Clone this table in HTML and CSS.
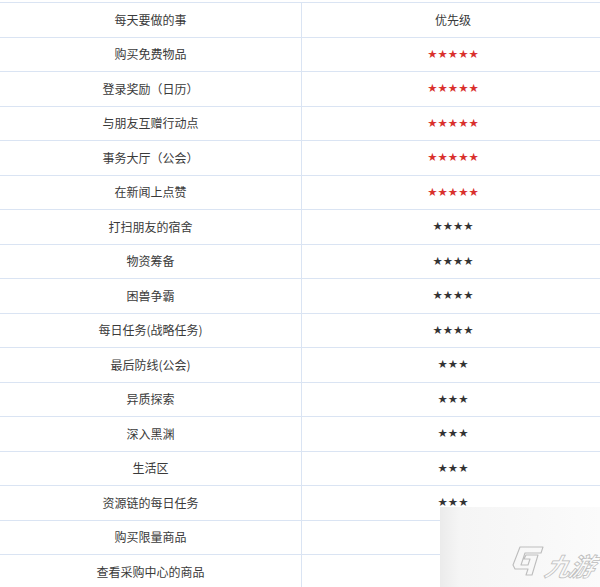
FILE: index.html
```html
<!DOCTYPE html>
<html lang="zh-CN">
<head>
<meta charset="utf-8">
<title>每天要做的事</title>
<link rel="stylesheet" href="styles.css">
</head>
<body>
<div class="table">
  <div class="row"><div class="cell name">每天要做的事</div><div class="cell prio">优先级</div></div>
  <div class="row"><div class="cell name">购买免费物品</div><div class="cell prio stars red">★★★★★</div></div>
  <div class="row"><div class="cell name">登录奖励（日历）</div><div class="cell prio stars red">★★★★★</div></div>
  <div class="row"><div class="cell name">与朋友互赠行动点</div><div class="cell prio stars red">★★★★★</div></div>
  <div class="row"><div class="cell name">事务大厅（公会）</div><div class="cell prio stars red">★★★★★</div></div>
  <div class="row"><div class="cell name">在新闻上点赞</div><div class="cell prio stars red">★★★★★</div></div>
  <div class="row"><div class="cell name">打扫朋友的宿舍</div><div class="cell prio stars">★★★★</div></div>
  <div class="row"><div class="cell name">物资筹备</div><div class="cell prio stars">★★★★</div></div>
  <div class="row"><div class="cell name">困兽争霸</div><div class="cell prio stars">★★★★</div></div>
  <div class="row"><div class="cell name">每日任务(战略任务)</div><div class="cell prio stars">★★★★</div></div>
  <div class="row"><div class="cell name">最后防线(公会)</div><div class="cell prio stars">★★★</div></div>
  <div class="row"><div class="cell name">异质探索</div><div class="cell prio stars">★★★</div></div>
  <div class="row"><div class="cell name">深入黑渊</div><div class="cell prio stars">★★★</div></div>
  <div class="row"><div class="cell name">生活区</div><div class="cell prio stars">★★★</div></div>
  <div class="row"><div class="cell name">资源链的每日任务</div><div class="cell prio stars">★★★</div></div>
  <div class="row"><div class="cell name">购买限量商品</div><div class="cell prio stars"></div></div>
  <div class="row"><div class="cell name">查看采购中心的商品</div><div class="cell prio stars"></div></div>
</div>
<div class="watermark">
  <svg class="wm-icon" width="34" height="32" viewBox="0 0 34 32" fill="none" stroke="#bdbdbd" stroke-width="1.1" stroke-linejoin="round">
    <path d="M9 2 L32 2 L30 8 L14 8 L10 20 L17 20 L19 14 L13 14 L15 10 L27 10 L21 30 L15 30 L17 24 L4 24 L2 20 Z"/>
  </svg>
  <span class="wm-text">九游</span>
</div>
</body>
</html>
```
FILE: styles.css
```css
html, body {
  margin: 0;
  padding: 0;
  background: #ffffff;
}
body {
  padding-top: 2px;
  font-family: "Noto Sans CJK SC", "Noto Sans", sans-serif;
  font-size: 12px;
  color: #3a3a3a;
  overflow: hidden;
  height: 587px;
  position: relative;
}
.table {
  width: 604px;
  border-top: 1px solid #dae4f3;
}
.row {
  display: flex;
  height: 33.5px;
  border-bottom: 1px solid #dae4f3;
}
.cell {
  display: flex;
  align-items: center;
  justify-content: center;
  line-height: 1;
}
.name {
  width: 301px;
  border-right: 1.5px solid #dae4f3;
}
.prio {
  flex: 1;
}
.stars {
  font-family: "DejaVu Sans", sans-serif;
  font-size: 11.5px;
  color: #333333;
  letter-spacing: 0;
}
.stars.red {
  color: #d9302c;
}
.watermark {
  position: absolute;
  left: 440px;
  top: 507px;
  width: 160px;
  height: 80px;
  background: linear-gradient(90deg, #ebebeb 0, #f5f5f5 12%, #f8f8f8 60%, #fbfbfb 100%);
  display: flex;
  align-items: flex-end;
  padding: 0 0 9px 71px;
  box-sizing: border-box;
  gap: 1px;
}
.wm-icon {
  display: block;
  margin-bottom: 1px;
}
.wm-text {
  font-family: "Noto Sans CJK SC", sans-serif;
  font-size: 25px;
  font-weight: 700;
  font-style: italic;
  line-height: 1;
  color: transparent;
  -webkit-text-stroke: 0.8px #bdbdbd;
  letter-spacing: -1px;
  transform: skewX(-14deg);
  white-space: nowrap;
}
```
